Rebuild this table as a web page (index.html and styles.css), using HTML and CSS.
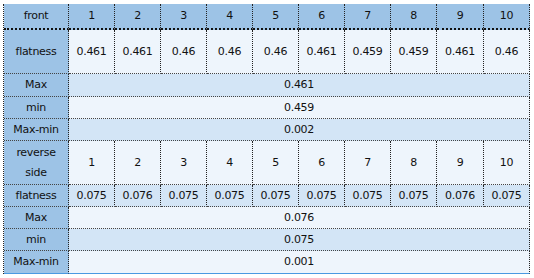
FILE: index.html
```html
<!DOCTYPE html>
<html>
<head>
<meta charset="utf-8">
<link rel="stylesheet" href="styles.css">
</head>
<body>
<table class="sheet">
  <colgroup>
    <col class="c-label">
    <col class="c-num"><col class="c-num"><col class="c-num"><col class="c-num"><col class="c-num">
    <col class="c-num"><col class="c-num"><col class="c-num"><col class="c-num-wide"><col class="c-num">
  </colgroup>
  <tr class="r-head">
    <td class="lab">front</td>
    <td class="hd">1</td><td class="hd">2</td><td class="hd">3</td><td class="hd">4</td><td class="hd">5</td>
    <td class="hd">6</td><td class="hd">7</td><td class="hd">8</td><td class="hd">9</td><td class="hd">10</td>
  </tr>
  <tr class="r-tall light">
    <td class="lab">flatness</td>
    <td>0.461</td><td>0.461</td><td>0.46</td><td>0.46</td><td>0.46</td>
    <td>0.461</td><td>0.459</td><td>0.459</td><td>0.461</td><td>0.46</td>
  </tr>
  <tr class="r-max mid">
    <td class="lab">Max</td>
    <td colspan="10">0.461</td>
  </tr>
  <tr class="r-std light">
    <td class="lab">min</td>
    <td colspan="10">0.459</td>
  </tr>
  <tr class="r-std mid">
    <td class="lab">Max-min</td>
    <td colspan="10">0.002</td>
  </tr>
  <tr class="r-tall light">
    <td class="lab two">reverse<br>side</td>
    <td>1</td><td>2</td><td>3</td><td>4</td><td>5</td>
    <td>6</td><td>7</td><td>8</td><td>9</td><td>10</td>
  </tr>
  <tr class="r-std mid">
    <td class="lab">flatness</td>
    <td>0.075</td><td>0.076</td><td>0.075</td><td>0.075</td><td>0.075</td>
    <td>0.075</td><td>0.075</td><td>0.075</td><td>0.076</td><td>0.075</td>
  </tr>
  <tr class="r-std light">
    <td class="lab">Max</td>
    <td colspan="10">0.076</td>
  </tr>
  <tr class="r-std mid">
    <td class="lab">min</td>
    <td colspan="10">0.075</td>
  </tr>
  <tr class="r-last light">
    <td class="lab">Max-min</td>
    <td colspan="10">0.001</td>
  </tr>
</table>
</body>
</html>
```
FILE: styles.css
```css
html, body {
  margin: 0;
  padding: 0;
  background: #ffffff;
}

.sheet {
  margin: 4px 0 0 3px;
  border-collapse: separate;
  border-spacing: 0;
  table-layout: fixed;
  width: 527px;
  border-left: 1px dotted #222;
  font-family: "DejaVu Sans", Verdana, sans-serif;
  font-size: 11px;
  letter-spacing: -0.3px;
  color: #111;
}

.c-label { width: 65px; }
.c-num { width: 46px; }
.c-num-wide { width: 47px; }

.sheet td {
  box-sizing: border-box;
  padding: 0;
  text-align: center;
  vertical-align: middle;
  border-right: 1px dotted #222;
  border-bottom: 1px dotted #444;
  line-height: 20px;
  white-space: nowrap;
}

.sheet td.lab {
  background: #9dc3e6;
}

.r-head td {
  background: #9dc3e6;
  height: 26px;
  border-bottom: 2px dotted #111;
}

.light td { background: #eef5fc; }
.mid td { background: #d3e5f6; }

.r-tall td { height: 44px; }
.r-max td { height: 23px; }
.r-std td { height: 22px; }
.r-last td {
  height: 23px;
  border-bottom: 1px solid #4a9ae2;
}
```
